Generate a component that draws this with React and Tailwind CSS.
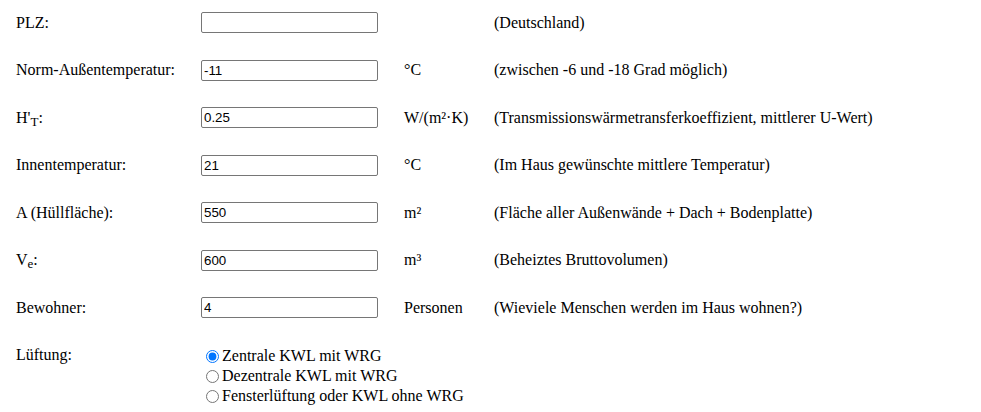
const rows = [
  { label: 'PLZ:', value: '', unit: '', note: '(Deutschland)' },
  { label: 'Norm-Außentemperatur:', value: '-11', unit: '°C', note: '(zwischen -6 und -18 Grad möglich)' },
  {
    label: (
      <>
        H'<sub className="text-[13px] relative top-[3px] align-baseline">T</sub>:
      </>
    ),
    value: '0.25',
    unit: 'W/(m²·K)',
    note: '(Transmissionswärmetransferkoeffizient, mittlerer U-Wert)',
  },
  { label: 'Innentemperatur:', value: '21', unit: '°C', note: '(Im Haus gewünschte mittlere Temperatur)' },
  { label: 'A (Hüllfläche):', value: '550', unit: 'm²', note: '(Fläche aller Außenwände + Dach + Bodenplatte)' },
  {
    label: (
      <>
        V<sub className="text-[13px] relative top-[3px] align-baseline">e</sub>:
      </>
    ),
    value: '600',
    unit: 'm³',
    note: '(Beheiztes Bruttovolumen)',
  },
  { label: 'Bewohner:', value: '4', unit: 'Personen', note: '(Wieviele Menschen werden im Haus wohnen?)' },
];

const options = ['Zentrale KWL mit WRG', 'Dezentrale KWL mit WRG', 'Fensterlüftung oder KWL ohne WRG'];

export default function App() {
  return (
    <div className="min-h-[412px] bg-white px-4 pt-[12px] text-[16px] text-black font-['Liberation_Serif','Times_New_Roman',serif]">
      <div className="flex flex-col gap-[26.5px]">
        {rows.map((r, i) => (
          <div key={i} className="flex items-center h-[21px]">
            <div className="w-[185px] shrink-0 leading-[20px]">{r.label}</div>
            <input
              type="text"
              defaultValue={r.value}
              className="w-[177px] h-[21px] shrink-0 rounded-[2px] border border-[#767676] bg-white px-[2px] text-[13.33px] text-black font-['Liberation_Sans',Arial,sans-serif] outline-none"
            />
            <div className="w-[90px] shrink-0 ml-[26px]">{r.unit}</div>
            <div>{r.note}</div>
          </div>
        ))}
      </div>

      <div className="flex mt-[28px]">
        <div className="w-[185px] shrink-0 leading-[18px]">Lüftung:</div>
        <div className="flex flex-col">
          {options.map((o, i) => (
            <label key={o} className="flex items-start leading-[20px] h-[20px]">
              <input
                type="radio"
                name="lueftung"
                defaultChecked={i === 0}
                className="w-[13px] h-[13px] mt-[4px] ml-[5px] mr-[3px] accent-[#0075ff]"
              />
              <span>{o}</span>
            </label>
          ))}
        </div>
      </div>
    </div>
  );
}
